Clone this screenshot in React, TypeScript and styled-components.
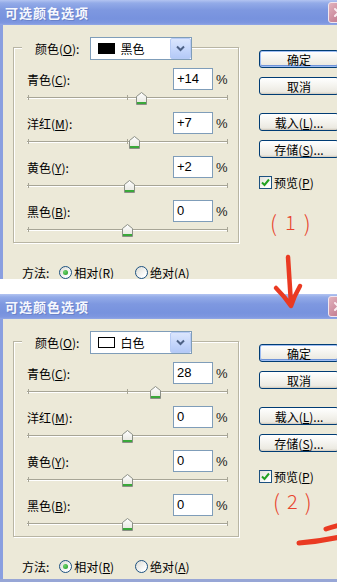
import React from "react";
import styled, { createGlobalStyle } from "styled-components";

const Global = createGlobalStyle`
  html, body { margin: 0; padding: 0; background: #fff; overflow: hidden; }
  body { width: 337px; height: 582px; font-family: "Noto Sans CJK SC", sans-serif; }
  * { box-sizing: border-box; }
`;

const Page = styled.div`
  position: relative;
  width: 337px;
  height: 582px;
  overflow: hidden;
  display: flex;
  flex-direction: column;
  gap: 15px;
  background: #fff;
`;

const Window = styled.div<{ $h: number; $edge?: boolean }>`
  width: 351px;
  height: ${(p) => p.$h}px;
  flex: none;
  display: flex;
  flex-direction: column;
  overflow: hidden;
  background: #ece9d8;
  border-bottom: ${(p) => (p.$edge ? "3px solid #97a6d6" : "none")};
`;

const TitleBar = styled.div`
  height: 25px;
  flex: none;
  display: flex;
  align-items: center;
  justify-content: space-between;
  padding: 0 2px 0 5px;
  background: linear-gradient(
    #b3c4f1 0%,
    #93abe8 12%,
    #7e98e0 40%,
    #7792de 75%,
    #7e97e0 92%,
    #92a8e6 100%
  );
`;

const Title = styled.span`
  font-family: "Noto Sans CJK SC", sans-serif;
  font-weight: bold;
  font-size: 13px;
  letter-spacing: 1px;
  color: #f6f8fe;
  text-shadow: 1px 1px 0 #6a82c8;
`;

const CloseBtn = styled.div`
  width: 21px;
  height: 21px;
  border: 1px solid #f2e6ee;
  border-radius: 3px;
  background: linear-gradient(135deg, #e2b3bd, #c9879a 60%, #b9748a);
  display: flex;
  align-items: center;
  justify-content: center;
`;

const Body = styled.div`
  flex: 1;
  display: flex;
  border-left: 3px solid #8a9fe0;
`;

const LeftCol = styled.div`
  width: 236px;
  flex: none;
  display: flex;
  flex-direction: column;
`;

const GroupBox = styled.div`
  margin: 22px 0 0 10px;
  width: 226px;
  border: 1px solid #b8b5a4;
  box-shadow: inset 1px 1px 0 #fff, 1px 1px 0 #fff;
  padding: 0 10px 0 13px;
  display: flex;
  flex-direction: column;
`;

const Header = styled.div`
  margin: -11px 0 8px -5px;
  padding-left: 13px;
  align-self: flex-start;
  display: flex;
  align-items: center;
  gap: 11px;
  background: #ece9d8;
  height: 23px;
`;

const Label = styled.span`
  font-family: "Noto Sans CJK SC", sans-serif;
  font-size: 12px;
  color: #000;
  white-space: nowrap;
  u { text-decoration: underline; text-underline-offset: 1px; }
`;

const Select = styled.div`
  width: 102px;
  height: 23px;
  border: 1px solid #7f9db9;
  background: #fff;
  display: flex;
  align-items: center;
  padding-left: 7px;
  gap: 5px;
`;

const Swatch = styled.div<{ $color: string }>`
  width: 17px;
  height: 11px;
  background: ${(p) => p.$color};
  border: 1px solid #000;
  flex: none;
`;

const SelectText = styled.span`
  font-family: "Noto Sans CJK SC", sans-serif;
  font-size: 12px;
  flex: 1;
`;

const DropBtn = styled.div`
  width: 21px;
  height: 21px;
  flex: none;
  border: 1px solid #b7cbf5;
  border-radius: 2px;
  background: linear-gradient(#dbe6fd, #c3d5fb 60%, #b4c9f7);
  display: flex;
  align-items: center;
  justify-content: center;
`;

const Channel = styled.div`
  display: flex;
  flex-direction: column;
  margin-bottom: 2px;
  &:last-child { margin-bottom: 0; }
`;

const InputRow = styled.div`
  height: 22px;
  display: flex;
  align-items: center;
`;

const RowLabel = styled(Label)`
  flex: 1;
`;

const NumInput = styled.div`
  width: 40px;
  height: 22px;
  border: 1px solid #7f9db9;
  background: #fff;
  font-family: "Liberation Sans", sans-serif;
  font-size: 13px;
  line-height: 20px;
  padding-left: 3px;
  color: #000;
`;

const Percent = styled.span`
  width: 12px;
  margin-left: 3px;
  font-family: "Liberation Sans", sans-serif;
  font-size: 13px;
  color: #222;
`;

const SliderArea = styled.div`
  position: relative;
  height: 20px;
`;

const Track = styled.div`
  margin-top: 7px;
  height: 2px;
  border-top: 1px solid #a7a596;
  border-bottom: 1px solid #fff;
`;

const Tick = styled.div<{ $x: number }>`
  position: absolute;
  top: 5px;
  left: ${(p) => p.$x}px;
  width: 1px;
  height: 5px;
  background: #a7a596;
`;

const Thumb = styled.svg`
  position: absolute;
  top: 2px;
  width: 11px;
  height: 13px;
`;

const MethodRow = styled.div`
  margin: 21px 0 0 19px;
  height: 16px;
  display: flex;
  align-items: center;
  gap: 10px;
`;

const RadioOption = styled.label`
  display: flex;
  align-items: center;
  gap: 2px;
  margin-right: 11px;
`;

const Radio = styled.div<{ $on?: boolean }>`
  width: 13px;
  height: 13px;
  border-radius: 50%;
  border: 1px solid #1c5180;
  background: linear-gradient(135deg, #dcdcd5, #fff 80%);
  display: flex;
  align-items: center;
  justify-content: center;
  &::after {
    content: "";
    display: ${(p) => (p.$on ? "block" : "none")};
    width: 5px;
    height: 5px;
    border-radius: 50%;
    background: radial-gradient(circle at 35% 35%, #6fd36f, #1f9a1f);
  }
`;

const RightCol = styled.div`
  margin: 25px 0 0 20px;
  display: flex;
  flex-direction: column;
  align-items: flex-start;
`;

const Button = styled.div<{ $default?: boolean; $gap?: number }>`
  width: 80px;
  height: 18px;
  margin-top: ${(p) => p.$gap ?? 0}px;
  border: 1px solid #003c74;
  border-radius: 3px;
  background: linear-gradient(#ffffff, #f4f3ee 50%, #eceae2 85%, #d8d3c7);
  box-shadow: ${(p) =>
    p.$default ? "inset 0 0 0 1px #9fbdf2, inset 0 -1px 0 1px #6f93d8" : "inset 0 -1px 0 #d6d0c5"};
  display: flex;
  align-items: center;
  justify-content: center;
  font-family: "Noto Sans CJK SC", sans-serif;
  font-size: 12px;
  color: #000;
  u { text-decoration: underline; text-underline-offset: 1px; }
`;

const CheckRow = styled.div`
  margin-top: 16px;
  display: flex;
  align-items: center;
  gap: 2px;
`;

const CheckBox = styled.div`
  width: 13px;
  height: 13px;
  border: 1px solid #1c5180;
  background: linear-gradient(135deg, #e0e0d9, #fff 80%);
  display: flex;
  align-items: center;
  justify-content: center;
`;

const Annot = styled.div<{ $top: number; $left: number; $gap: number }>`
  margin: ${(p) => p.$top}px 0 0 ${(p) => p.$left}px;
  display: flex;
  align-items: center;
  gap: ${(p) => p.$gap}px;
  font-family: "Noto Sans CJK SC", sans-serif;
  font-weight: 300;
  font-size: 20px;
  line-height: 20px;
  color: #e8442e;
  white-space: nowrap;
`;

const Paren = styled.span`
  font-size: 22px;
`;

const ArrowSvg = styled.svg`
  position: absolute;
  pointer-events: none;
`;

type Ch = { name: string; key: string; text: string; value: number };

const dataA: Ch[] = [
  { name: "青色", key: "C", text: "+14", value: 14 },
  { name: "洋红", key: "M", text: "+7", value: 7 },
  { name: "黄色", key: "Y", text: "+2", value: 2 },
  { name: "黑色", key: "B", text: "0", value: 0 },
];

const dataB: Ch[] = [
  { name: "青色", key: "C", text: "28", value: 28 },
  { name: "洋红", key: "M", text: "0", value: 0 },
  { name: "黄色", key: "Y", text: "0", value: 0 },
  { name: "黑色", key: "B", text: "0", value: 0 },
];

const ThumbIcon: React.FC<{ left: number }> = ({ left }) => (
  <Thumb viewBox="0 0 11 13" style={{ left }}>
    <defs>
      <linearGradient id="tg" x1="0" y1="0" x2="0" y2="1">
        <stop offset="0" stopColor="#ffffff" />
        <stop offset="1" stopColor="#e4e4dc" />
      </linearGradient>
    </defs>
    <path d="M0.5 4.5 L5.5 0.5 L10.5 4.5 L10.5 12.5 L0.5 12.5 Z" fill="url(#tg)" stroke="#8b8f86" />
    <rect x="1" y="10" width="9" height="2" fill="#3aa83a" />
  </Thumb>
);

const Dialog: React.FC<{
  h: number;
  edge?: boolean;
  swatch: string;
  colorName: string;
  data: Ch[];
  num: string;
  annotTop: number;
  annotLeft: number;
  annotGap: number;
}> = ({ h, edge, swatch, colorName, data, num, annotTop, annotLeft, annotGap }) => (
  <Window $h={h} $edge={edge}>
    <TitleBar>
      <Title>可选颜色选项</Title>
      <CloseBtn>
        <svg width="11" height="11" viewBox="0 0 11 11">
          <path d="M2 2 L9 9 M9 2 L2 9" stroke="#fbeef2" strokeWidth="2" strokeLinecap="round" />
        </svg>
      </CloseBtn>
    </TitleBar>
    <Body>
      <LeftCol>
        <GroupBox>
          <Header>
            <Label>
              颜色(<u>O</u>):
            </Label>
            <Select>
              <Swatch $color={swatch} />
              <SelectText>{colorName}</SelectText>
              <DropBtn>
                <svg width="9" height="7" viewBox="0 0 9 7">
                  <path d="M1 1.5 L4.5 5 L8 1.5" fill="none" stroke="#4d6185" strokeWidth="2" />
                </svg>
              </DropBtn>
            </Select>
          </Header>
          {data.map((c) => (
            <Channel key={c.key}>
              <InputRow>
                <RowLabel>
                  {c.name}(<u>{c.key}</u>):
                </RowLabel>
                <NumInput>{c.text}</NumInput>
                <Percent>%</Percent>
              </InputRow>
              <SliderArea>
                <Track />
                <Tick $x={1} />
                <Tick $x={100} />
                <Tick $x={200} />
                <ThumbIcon left={95 + c.value} />
              </SliderArea>
            </Channel>
          ))}
        </GroupBox>
        <MethodRow>
          <Label>方法:</Label>
          <RadioOption>
            <Radio $on />
            <Label>
              相对(<u>R</u>)
            </Label>
          </RadioOption>
          <RadioOption>
            <Radio />
            <Label>
              绝对(<u>A</u>)
            </Label>
          </RadioOption>
        </MethodRow>
      </LeftCol>
      <RightCol>
        <Button $default>确定</Button>
        <Button $gap={9}>取消</Button>
        <Button $gap={18}>
          载入(<u>L</u>)...
        </Button>
        <Button $gap={9}>
          存储(<u>S</u>)...
        </Button>
        <CheckRow>
          <CheckBox>
            <svg width="9" height="9" viewBox="0 0 9 9">
              <path d="M1 4.5 L3.5 7 L8 1.5" fill="none" stroke="#21a121" strokeWidth="2" />
            </svg>
          </CheckBox>
          <Label>
            预览(<u>P</u>)
          </Label>
        </CheckRow>
        <Annot $top={annotTop} $left={annotLeft} $gap={annotGap}>
          <Paren>(</Paren>
          <span>{num}</span>
          <Paren>)</Paren>
        </Annot>
      </RightCol>
    </Body>
  </Window>
);

export default function App() {
  return (
    <>
      <Global />
      <Page>
        <Dialog
          h={279}
          swatch="#000"
          colorName="黑色"
          data={dataA}
          num="1"
          annotTop={21}
          annotLeft={11}
          annotGap={8}
        />
        <Dialog
          h={288}
          edge
          swatch="#fff"
          colorName="白色"
          data={dataB}
          num="2"
          annotTop={6}
          annotLeft={14}
          annotGap={7}
        />
        <ArrowSvg width="40" height="62" viewBox="0 0 40 62" style={{ left: 268, top: 252 }}>
          <path
            d="M20 5 C 21 20, 22 35, 23 52 M8 36 C 14 42, 19 48, 23 54 C 25 48, 28 41, 32 34"
            fill="none"
            stroke="#ea3a22"
            strokeWidth="4.5"
            strokeLinecap="round"
            strokeLinejoin="round"
          />
        </ArrowSvg>
        <ArrowSvg width="46" height="36" viewBox="0 0 46 36" style={{ left: 294, top: 522 }}>
          <path
            d="M5 21 C 18 20, 32 18, 46 15 M32 7 C 38 5, 42 4, 46 3"
            fill="none"
            stroke="#ea3a22"
            strokeWidth="5"
            strokeLinecap="round"
          />
        </ArrowSvg>
      </Page>
    </>
  );
}
